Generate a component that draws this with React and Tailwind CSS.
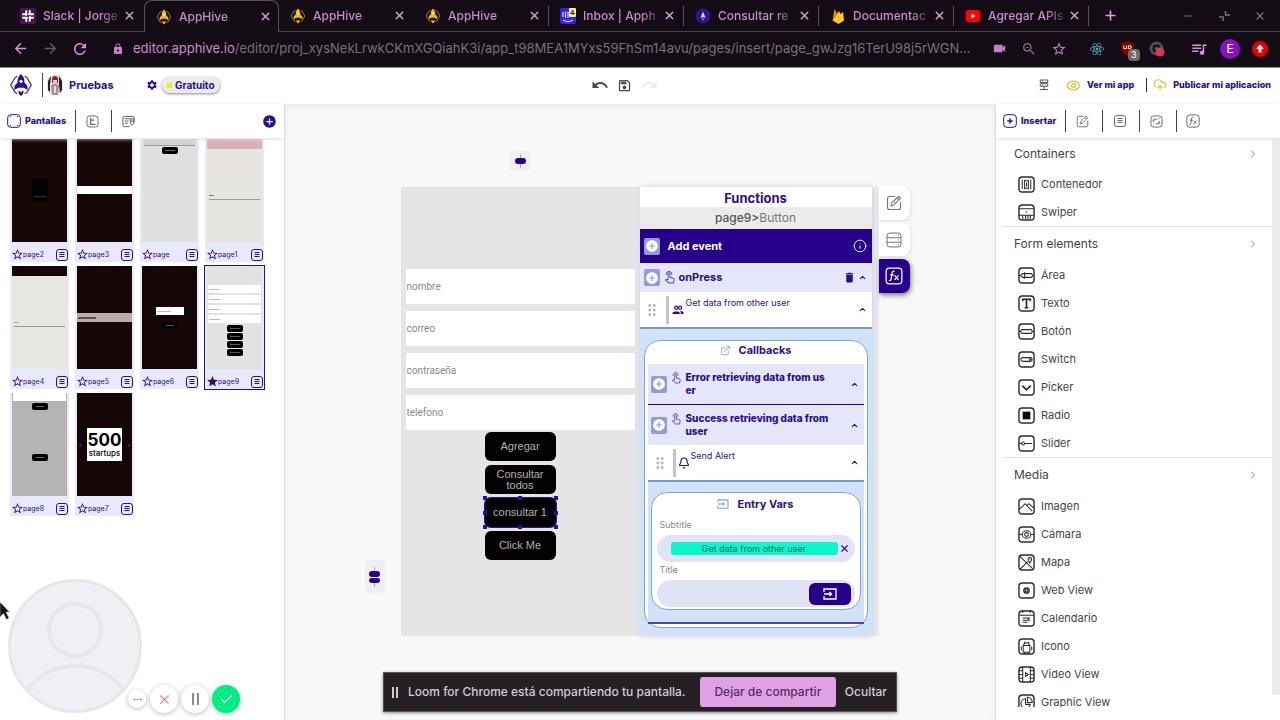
import React from "react";
import {
  MdArrowBack, MdArrowForward, MdRefresh, MdLock, MdVideocam, MdZoomOut, MdStarBorder, MdStar,
  MdQueueMusic, MdUndo, MdRedo, MdOutlineSave, MdSettings, MdAddCircle, MdDelete,
  MdDragIndicator,
} from "react-icons/md";
import { FaReact } from "react-icons/fa";
import { X, Plus, Minus, ChevronRight, ChevronUp, Eye, CloudUpload, Info, Bell, Check, Ellipsis, ExternalLink } from "lucide-react";

function Hive({ className, color, body }) {
  return (
    <svg viewBox="0 0 24 26" className={className} fill="none" stroke={color} strokeWidth="1.4" aria-hidden="true">
      <path d="M8 3.5 5.5 5 .9 13l4.600 8 2.500 1.500M16 3.500 18.500 5l4.600 8-4.600 8-2.500 1.500" />
      <path d="M12 1c-3 2.500-4 6-3.600 9L5 14v4.500l4-2.500h6l4 2.500V14l-3.400-4C16 7 15 3.500 12 1Z" fill={body} stroke="none" />
      <circle cx="12" cy="9" r="1.700" fill="#fff" stroke="none" />
      <path d="M9 19.500h1.500l1.500 1.500 1.500-1.500H15L14 23l-2 2-2-2Z" fill={body} stroke="none" />
    </svg>
  );
}

function Favicon({ kind }) {
  if (kind === "hive") return <Hive className="h-4 w-4" color="#a98b3c" body="#f5b80f" />;
  const cls = "h-4 w-4";
  if (kind === "slack")
    return (
      <svg viewBox="0 0 16 16" className={cls} aria-hidden="true">
        <rect width="16" height="16" rx="2" fill="#4a154b" />
        <path d="M6.300 3v4M9.700 9v4M3 9.700h4M9 6.300h4M9.700 3v2M6.300 11v2M3 6.300h2M11 9.700h2" stroke="#fff" strokeWidth="2" strokeLinecap="round" />
      </svg>
    );
  if (kind === "inbox")
    return (
      <svg viewBox="0 0 16 16" className={cls} aria-hidden="true">
        <rect width="16" height="16" rx="2" fill="#3a22d8" />
        <path d="M3 4v5M5.500 3.500v6.500M8 3.500v6.500M3 12c3 2 7 2 10 0" stroke="#dcd6ff" strokeWidth="1.200" fill="none" />
        <rect x="9" width="7" height="9" rx="1" fill="#f2ee9a" />
        <path d="M13 7V2l-2.500 3.500H15" stroke="#333" fill="none" />
      </svg>
    );
  if (kind === "docs")
    return (
      <svg viewBox="0 0 16 16" className={cls} aria-hidden="true">
        <circle cx="8" cy="8" r="7.500" fill="#34128f" />
        <path d="M8 3.500 5.500 10 8 9l2.500 1Z" fill="#e4dbff" />
        <path d="m7 10.500 1 2 1-2Z" fill="#e4dbff" />
      </svg>
    );
  if (kind === "fire")
    return (
      <svg viewBox="0 0 16 16" className={cls} aria-hidden="true">
        <path d="M2.500 12.500 4.500 1 7 5.500Z" fill="#f58a0b" />
        <path d="M2.500 12.500 9 3l1.500 3L13 4l1 8.500L8.500 16Z" fill="#ffca28" />
      </svg>
    );
  return (
    <svg viewBox="0 0 16 16" className={cls} aria-hidden="true">
      <rect x=".5" y="2" width="15" height="12" rx="3" fill="#f00" />
      <path d="m6.500 5.500 4 2.500-4 2.500Z" fill="#fff" />
    </svg>
  );
}

const TABS = [
  ["slack", "Slack | Jorge"],
  ["hive", "AppHive", true],
  ["hive", "AppHive"],
  ["hive", "AppHive"],
  ["inbox", "Inbox | Apph"],
  ["docs", "Consultar re"],
  ["fire", "Documentac"],
  ["youtube", "Agregar APIs"],
];

function Tab({ tab, divider }) {
  const [icon, title, active] = tab;
  return (
    <div
      className={
        "flex w-[135px] shrink-0 items-center pl-[11px] " +
        (active ? "rounded-t-lg border border-b-0 border-[#5b505c]" : "border-b border-[#4a404b]")
      }
    >
      <Favicon kind={icon} />
      <span className="ml-[7px] w-[76px] whitespace-nowrap text-[12px] font-medium text-[#c690cc] [mask-image:linear-gradient(90deg,#000_75%,#0004)]">
        {title}
      </span>
      <button aria-label="Cerrar pestaña" className="ml-1 text-[#d9a3dd]"><X size={13} strokeWidth={2.5} /></button>
      {divider && <span className="ml-auto h-5 w-px bg-[#5b505c]" />}
    </div>
  );
}

function BrowserChrome() {
  return (
    <header className="shrink-0 border-b border-[#8b8b8b] bg-[#140c14] font-['Inter',sans-serif]">
      <div className="flex h-8">
        <div className="w-[9px] shrink-0 border-b border-[#4a404b]" />
        {TABS.map((t, i) => <Tab key={i} tab={t} divider={i > 2} />)}
        <div className="flex grow items-center border-b border-[#4a404b] pl-[14px] text-[#8e6492]">
          <button aria-label="Nueva pestaña" className="text-[#d9a3dd]"><Plus size={15} strokeWidth={2.5} /></button>
          <div className="ml-auto flex items-center gap-6 pr-[14px]">
            <button aria-label="Minimizar"><Minus size={12} /></button>
            <button aria-label="Restaurar">
              <svg viewBox="0 0 12 12" className="h-3 w-3" fill="none" stroke="currentColor" strokeWidth="1.500"><path d="M1 7h4v4M7.500 1v4H12" /></svg>
            </button>
            <button aria-label="Cerrar"><X size={12} strokeWidth={2.5} /></button>
          </div>
        </div>
      </div>
      <div className="flex h-[35px] items-center px-3 pb-[2px] text-[#bf83c5]">
        <button aria-label="Atrás" className="text-[#d694dc]"><MdArrowBack size={17} /></button>
        <button aria-label="Adelante" className="ml-[13px] text-[#6e5571]"><MdArrowForward size={17} /></button>
        <button aria-label="Recargar" className="ml-3 text-[#d694dc]"><MdRefresh size={18} /></button>
        <MdLock size={12} className="ml-[23px] shrink-0" />
        <p className="ml-[9px] min-w-0 grow truncate text-[13px] text-[#7b6f7d]">
          <span className="text-[#c690cc]">editor.apphive.io</span>/editor/proj_xysNekLrwkCKmXGQiahK3i/app_t98MEA1MYxs59FhSm14avu/pages/insert/page_gwJzg16TerU98j5rWGN...
        </p>
        <div className="ml-2 flex shrink-0 items-center">
          <MdVideocam size={15} />
          <MdZoomOut size={16} className="ml-[14px] text-[#8e6492]" />
          <MdStarBorder size={16} className="ml-[14px]" />
          <FaReact size={14} className="ml-[23px] text-[#4fb8cf]" />
          <span className="relative ml-4">
            <svg viewBox="0 0 16 16" className="h-[15px] w-[15px]"><path d="M8 0c2 1.500 4 2 6.500 2v6c0 4-3 6.500-6.500 8-3.500-1.500-6.500-4-6.500-8V2C4 2 6 1.500 8 0Z" fill="#8a0000" /><path d="M4 5v3h3V5M9 5h1.500c2 0 2 3 0 3H9Z" stroke="#fff" fill="none" /></svg>
            <span className="absolute left-2 top-2 rounded-sm bg-[#6c6c6c] px-[3px] text-[9px] leading-3 text-white">3</span>
          </span>
          <svg viewBox="0 0 16 16" className="ml-[14px] h-4 w-4"><circle cx="7.500" cy="7.500" r="5.500" fill="none" stroke="#4e4d52" strokeWidth="3" /><circle cx="7.500" cy="7.500" r="2" fill="#4e4d52" /><circle cx="11" cy="11" r="4.500" fill="#d63a4a" /></svg>
          <MdQueueMusic size={18} className="ml-[25px] text-[#d694dc]" />
          <span className="ml-3 flex h-5 w-5 items-center justify-center rounded-full bg-[#8a10c4] text-[12px] text-white">E</span>
          <svg viewBox="0 0 16 16" className="ml-3 h-4 w-4"><circle cx="8" cy="8" r="8" fill="#e60000" /><path d="m8 3.500 4 4.300H9.500v3.700h-3V7.800H4Z" fill="#fff" /></svg>
        </div>
      </div>
    </header>
  );
}

function AppBar() {
  return (
    <nav className="flex h-9 shrink-0 items-center bg-white pb-[2px] text-[#2a0f8c]">
      <div className="flex flex-1 items-center pl-[9px]">
        <Hive className="h-6 w-6" color="#3b3a7a" body="#2a0f8c" />
        <span className="ml-[9px] h-6 w-px bg-[#444]" />
        <svg viewBox="0 0 16 20" className="ml-1 h-5 w-4" aria-hidden="true">
          <rect width="16" height="20" rx="7" fill="#e9dfe0" />
          <path d="M1 15V6L4 1l-1 9v7ZM12 1l3 5v9l-2 3-1-8Z" fill="#2a2024" />
          <path d="M5 4c0-4 6-4 6 0v4H5Z" fill="#8c2433" />
          <path d="M6 5h4v4H6Z" fill="#e8c5bd" />
          <path d="M4 11c2-3 6-3 8 0l-1 9H5Z" fill="#a58e92" />
          <path d="M7 11h2v7H7Z" fill="#e5d7d8" />
        </svg>
        <b className="ml-[6px] w-[77px] text-[11px]">Pruebas</b>
        <button aria-label="Configuración"><MdSettings size={12} /></button>
        <span className="ml-1 flex h-4 items-center rounded-full bg-[#ebebeb] px-[5px] text-[10px] font-bold shadow-[0_1px_3px_#888]">
          <i className="mr-[3px] h-[5px] w-[5px] bg-[#e6f200]" />Gratuito
        </span>
      </div>
      <div className="flex items-center gap-2 pr-8 text-[#4a4a4a]">
        <button aria-label="Deshacer"><MdUndo size={18} /></button>
        <button aria-label="Guardar"><MdOutlineSave size={15} /></button>
        <button aria-label="Rehacer" className="text-[#ececec]"><MdRedo size={18} /></button>
      </div>
      <div className="flex flex-1 items-center justify-end pr-[9px] text-[9px] font-extrabold">
        <svg viewBox="0 0 12 14" className="h-3 w-[10px]" fill="none" stroke="#555" strokeWidth="1.200"><path d="M1.500 1h9v3h-9zM1.500 5.500h9v3h-9zM6 8.500V12M1 12.500h10M3.500 2.500h1M3.500 7h1" /></svg>
        <a href="#preview" className="ml-[17px] flex items-center gap-[6px]"><Eye size={15} className="text-[#efb92c]" />Ver mi app</a>
        <span className="ml-3 mr-[6px] h-[14px] w-px bg-[#333]" />
        <a href="#publish" className="flex items-center gap-[6px]"><CloudUpload size={14} className="text-[#efb92c]" />Publicar mi aplicacion</a>
      </div>
    </nav>
  );
}

function MenuSquare({ className }) {
  return (
    <svg viewBox="0 0 12 12" className={className} fill="none" stroke="currentColor" aria-hidden="true">
      <rect x=".5" y=".5" width="11" height="11" rx="2.500" />
      <path d="M3.500 3.500h5M3.500 5.500h5M3.500 7.500h5" />
    </svg>
  );
}

function Vr() {
  return <span className="h-[22px] w-px bg-[#444]" />;
}

const PAGES = [
  { name: "page2", bg: "bg-[#150608]", art: <div className="mx-auto mt-10 flex h-[22px] w-4 flex-col items-center justify-end gap-1 bg-[#040203] pb-1"><i className="h-px w-3 bg-[#3a3325]" /></div> },
  { name: "page3", bg: "bg-[#150608]", art: <div className="mt-[47px] h-2 bg-white" /> },
  { name: "page", bg: "bg-[#dedfde]", art: <div><div className="mx-[2px] h-[7px] border-b border-[#999] bg-[#d3d3d3]" /><div className="mx-auto mt-px h-[7px] w-4 rounded-[2px] bg-black px-[3px] pt-[3px]"><i className="block h-px bg-[#666]" /></div></div> },
  { name: "page1", bg: "bg-[#e6e5e2]", art: <div><div className="h-[10px] bg-[#d9b0b8]" /><i className="ml-[2px] mt-[46px] block h-px w-[5px] bg-[#777]" /><i className="mx-[2px] mt-[3px] block h-px bg-[#999]" /></div> },
  { name: "page4", bg: "bg-[#e6e6e2]", art: <div><div className="h-[10px] bg-[#150608]" /><i className="ml-[2px] mt-[46px] block h-px w-[5px] bg-[#aaa]" /><i className="mx-[2px] mt-[3px] block h-px bg-[#999]" /></div> },
  { name: "page5", bg: "bg-[#150608]", art: <div className="mt-[47px] flex h-[9px] items-center bg-[#b8acad] pl-px"><i className="h-[2px] w-[18px] bg-[#5a4e50]" /></div> },
  { name: "page6", bg: "bg-[#150608]", art: <div><div className="mx-auto mt-[41px] flex h-2 w-7 items-center bg-white pl-px"><i className="h-px w-[14px] bg-[#c8b3b5]" /></div><div className="mx-auto mt-[7px] h-[6px] w-4 bg-[#050203] px-1 pt-[3px]"><i className="block h-px bg-[#555]" /></div></div> },
  {
    name: "page9", bg: "bg-[#e2e2e2]", selected: true,
    art: (
      <div className="flex flex-col gap-px px-px pt-[19px]">
        {[0, 1, 2, 3].map((k) => <div key={k} className="mb-px flex h-2 items-center bg-white pl-px"><i className="h-px w-[11px] bg-[#bbb]" /></div>)}
        {[0, 1, 2, 3].map((k) => <div key={k} className="mx-auto flex h-[7px] w-4 items-center rounded-[2px] bg-black px-[3px]"><i className="h-px grow bg-[#555]" /></div>)}
      </div>
    ),
  },
  { name: "page8", bg: "bg-[#b4b4b3]", art: <div><div className="mx-px h-2 bg-white" /><div className="mx-auto mt-[2px] h-[7px] w-4 rounded-[2px] bg-black px-1 pt-[3px]"><i className="block h-px bg-[#666]" /></div><div className="mx-auto mt-[44px] h-[7px] w-4 rounded-[2px] bg-black px-1 pt-[3px]"><i className="block h-px bg-[#666]" /></div></div> },
  {
    name: "page7", bg: "bg-[#150608]",
    art: (
      <div className="flex items-center justify-between px-[2px] pt-[35px] text-[6px] text-[#8a7a7c]">
        <span>‹</span>
        <div className="flex h-[33px] w-[35px] flex-col items-center justify-center bg-white text-black">
          <b className="text-[17px] leading-[16px]">500</b>
          <span className="text-[8px] font-medium leading-[10px]">startups</span>
        </div>
        <span>›</span>
      </div>
    ),
  },
];

function PageCard({ page }) {
  return (
    <li className={"flex h-[123px] flex-col bg-[#e9e9fd] px-[2px] text-[#2a0f8c] outline-[#2a0f8c] " + (page.selected ? "outline" : "")}>
      <div className={"h-[103px] overflow-hidden " + page.bg}>{page.art}</div>
      <div className="-mx-px flex grow items-center pt-[5px]">
        {page.selected ? <MdStar size={13} /> : <MdStarBorder size={13} />}
        <span className="-ml-px text-[7px] leading-[10px]">{page.name}</span>
        <button aria-label={"Opciones de " + page.name} className="ml-auto"><MenuSquare className="h-3 w-3" /></button>
      </div>
    </li>
  );
}

function ScreensPanel() {
  return (
    <aside className="flex w-[285px] shrink-0 flex-col border-r border-[#dcdcdc] bg-white">
      <div className="z-10 flex h-[34px] shrink-0 items-center px-[7px] text-[#2a0f8c] shadow-[0_1px_4px_#ddd]">
        <svg viewBox="0 0 14 14" className="h-[14px] w-[14px]" fill="none" stroke="currentColor"><rect x=".7" y=".7" width="12.600" height="12.600" rx="3" /><path d="M3 2.500h1M10 2.500h1M3 11.500h1M10 11.500h1" /></svg>
        <button className="ml-1 w-[50px] text-left text-[9px] font-extrabold">Pantallas</button>
        <Vr />
        <button aria-label="Árbol" className="ml-[10px] mr-3 text-[#666]">
          <svg viewBox="0 0 14 14" className="h-[13px] w-[13px]" fill="none" stroke="currentColor"><rect x="1" y="1" width="12" height="12" rx="3" /><path d="M5 3v7h5M5 5.500h4" strokeWidth="1.300" /></svg>
        </button>
        <Vr />
        <button aria-label="Notas" className="ml-[10px] text-[#555]">
          <svg viewBox="0 0 14 14" className="h-[13px] w-[13px]" fill="none" stroke="currentColor"><path d="M8 12.500H2.500a1.500 1.500 0 0 1-1.500-1.500V3a1.500 1.500 0 0 1 1.500-1.500h9A1.500 1.500 0 0 1 13 3v5M3 4h5M3 6.500h4M3 9h3M9 3.500v5.500l1.500 2L12.500 9V4M10.700 3v5" /></svg>
        </button>
        <button aria-label="Agregar pantalla" className="ml-auto"><MdAddCircle size={15} /></button>
      </div>
      <ul className="grid grid-cols-4 gap-x-[6px] gap-y-1 pl-[10px] pr-[20px] pt-px">
        {PAGES.map((p) => <PageCard key={p.name} page={p} />)}
      </ul>
    </aside>
  );
}

function SpacingHandle({ double }) {
  return (
    <div className={"flex w-5 flex-col items-center justify-center rounded-sm bg-[#efeff3] " + (double ? "h-[33px]" : "h-5")}>
      <i className="h-1 w-px bg-[#aaa]" />
      <i className="h-[6px] w-[11px] rounded-[3px] bg-[#26008b]" />
      {double && <i className="h-[6px] w-[11px] rounded-[3px] border-t border-[#efeff3] bg-[#26008b]" />}
      <i className="h-1 w-px bg-[#aaa]" />
    </div>
  );
}

const HANDLES = [
  "-left-[2px] -top-[2px]", "left-[33px] -top-[2px]", "-right-[2px] -top-[2px]",
  "-left-[2px] top-[13px]", "-right-[2px] top-[13px]",
  "-left-[2px] -bottom-[2px]", "left-[33px] -bottom-[2px]", "-right-[2px] -bottom-[2px]",
];

function Phone() {
  return (
    <div className="flex h-[449px] flex-col bg-[#e5e5e5] px-[5px] pt-[82px] font-['Roboto',sans-serif]">
      <div className="flex flex-col gap-[7px]">
        {["nombre", "correo", "contraseña", "telefono"].map((p) => (
          <input key={p} aria-label={p} placeholder={p} className="h-[35px] w-full bg-white px-px text-[10px] placeholder:text-[#888]" />
        ))}
      </div>
      <div className="mt-[2px] flex flex-col items-center gap-1 font-['Liberation_Sans',sans-serif] text-[11px] leading-[11px] text-[#b5b0b0]">
        {["Agregar", "Consultar todos", "consultar 1", "Click Me"].map((b, i) => (
          <button key={b} className={"relative h-[29px] w-[71px] rounded-md bg-[#040103] px-2 " + (i === 2 ? "ring-1 ring-[#2a0fa0]" : "")}>
            {b}
            {i === 2 && HANDLES.map((h) => <i key={h} className={"absolute h-1 w-1 bg-[#2a0fa0] " + h} />)}
          </button>
        ))}
      </div>
    </div>
  );
}

function AddBox() {
  return (
    <button aria-label="Agregar" className="flex h-[17px] w-4 shrink-0 items-center justify-center rounded-[2px] bg-[#939bdc] text-white">
      <MdAddCircle size={14} />
    </button>
  );
}

function Collapse() {
  return <button aria-label="Contraer" className="shrink-0 text-[#2a0f8c]"><ChevronUp size={9} strokeWidth={3} /></button>;
}

function TapIcon({ className }) {
  return (
    <svg viewBox="0 0 12 14" className={className} fill="none" stroke="currentColor" strokeWidth="1.100" strokeLinejoin="round" aria-hidden="true">
      <path d="M4.500 9.500V3.200a1 1 0 0 1 2 0V7l3.600.8c.7.200 1 .6.9 1.300l-.6 3.900H5.600L1.500 9.600c.8-.8 1.500-.7 3-.1M2.600 4.200a3 3 0 1 1 5.800 0" />
    </svg>
  );
}

function PeopleIcon({ className }) {
  return (
    <svg viewBox="0 0 13 11" className={className} fill="none" stroke="currentColor" strokeWidth="1.300" aria-hidden="true">
      <circle cx="4.500" cy="3" r="1.700" />
      <circle cx="8.800" cy="3" r="1.700" />
      <path d="M.5 10V8.600C1.500 6.500 7.500 6.500 8.500 8.600V10ZM9 6.200c2 .1 3.500 1 3.500 2.200V10H9.500V8.500C9.500 7.500 9.300 7 9 6.200Z" fill="currentColor" stroke="none" />
    </svg>
  );
}

function CallbackHead({ children }) {
  return (
    <div className="flex h-10 items-center bg-[#e6e6fb] pl-[3px] pr-[5px]">
      <AddBox />
      <TapIcon className="mb-3 ml-1 mr-[5px] h-3 w-[10px] shrink-0 text-[#5a4bb0]" />
      <b className="grow whitespace-nowrap text-[10px] font-extrabold leading-[13px]">{children}</b>
      <Collapse />
    </div>
  );
}

function EntryIcon({ className }) {
  return (
    <svg viewBox="0 0 14 12" className={className} fill="none" stroke="currentColor" strokeWidth="1.300" aria-hidden="true">
      <path d="M1 4V1h12v10H1V8M1 6h7.500M6.500 4l2 2-2 2" />
    </svg>
  );
}

function FunctionsPanel() {
  return (
    <section className="z-10 flex h-[449px] w-[232px] flex-col bg-[#d2e2f8] text-[#2a0f8c] shadow-[1px_0_6px_#c5d3e8]">
      <h2 className="h-5 bg-white text-center text-[13px] font-bold leading-[22px]">Functions</h2>
      <p className="h-[22px] bg-[#ebebeb] text-center text-[12px] leading-[22px] text-[#777]"><span className="font-medium text-[#555]">page9&gt;</span>Button</p>
      <div className="flex h-[34px] items-center bg-[#26008b] pl-1 pr-[5px] text-white">
        <AddBox />
        <b className="ml-2 grow text-[11px]">Add event</b>
        <Info size={14} strokeWidth={1.6} />
      </div>
      <div className="flex h-[29px] items-center bg-[#e6e6fb] pl-1 pr-[5px]">
        <AddBox />
        <TapIcon className="ml-1 h-[13px] w-[11px] text-[#5a4bb0]" />
        <b className="ml-1 grow text-[11px]">onPress</b>
        <button aria-label="Eliminar" className="mr-[2px]"><MdDelete size={13} /></button>
        <Collapse />
      </div>
      <div className="flex h-[37px] items-center border-b-2 border-[#6f9dd4] bg-white pl-[3px] pr-[5px]">
        <MdDragIndicator size={18} className="text-[#bbb]" />
        <i className="ml-[5px] h-7 w-[3px] bg-[#c4c4c4]" />
        <PeopleIcon className="ml-[3px] h-[10px] w-3" />
        <span className="mb-[14px] ml-[2px] grow text-[9px]">Get data from other user</span>
        <Collapse />
      </div>
      <div className="mx-1 mt-[11px] flex h-[288px] flex-col rounded-2xl border border-[#7ba5d8] bg-white px-[3px]">
        <h3 className="flex h-[23px] items-center justify-center gap-2 pb-1 text-[11px] font-bold"><ExternalLink size={11} className="text-[#7ba5d8]" />Callbacks</h3>
        <div className="border-b border-[#26008b]"><CallbackHead>Error retrieving data from us<br />er</CallbackHead></div>
        <CallbackHead>Success retrieving data from<br />user</CallbackHead>
        <div className="flex h-[37px] items-center border-b-2 border-[#6f9dd4] pl-[3px] pr-[5px]">
          <MdDragIndicator size={18} className="text-[#bbb]" />
          <i className="ml-1 h-7 w-[3px] bg-[#c4c4c4]" />
          <Bell size={12} strokeWidth={2.3} className="ml-[2px]" />
          <span className="mb-[14px] ml-px grow text-[9px]">Send Alert</span>
          <Collapse />
        </div>
        <div className="flex flex-col border-b-2 border-[#4d45a8] bg-[#d2e2f8] px-[3px] pb-3 pt-[10px]">
          <div className="flex h-[118px] flex-col rounded-2xl border border-[#7ba5d8] bg-white px-[5px]">
            <h3 className="flex h-[22px] items-center justify-center gap-2 text-[11px] font-bold"><EntryIcon className="h-[10px] w-3 text-[#7ba5d8]" />Entry Vars</h3>
            <span className="h-5 px-[3px] text-[9px] leading-[20px] text-[#888]">Subtitle</span>
            <div className="flex h-[27px] items-center rounded-full bg-[#e3e3f6] pl-[14px] pr-[5px]">
              <button className="h-[13px] grow rounded-[3px] bg-[#0cf5cb] text-[9px] leading-[13px] text-[#206760]">Get data from other user</button>
              <button aria-label="Quitar" className="ml-px"><X size={11} strokeWidth={2.5} /></button>
            </div>
            <label htmlFor="alert-title" className="h-[18px] px-[3px] text-[9px] leading-[16px] text-[#888]">Title</label>
            <div className="flex h-[27px] items-center rounded-full bg-[#e3e3f6] pl-3 pr-1">
              <input id="alert-title" className="h-full min-w-0 grow bg-transparent text-[10px]" />
              <button aria-label="Insertar variable" className="flex h-[22px] w-[42px] shrink-0 items-center justify-center rounded-md bg-[#26008b] text-white"><EntryIcon className="h-3 w-[14px]" /></button>
            </div>
          </div>
        </div>
      </div>
    </section>
  );
}

function EditSquare({ className }) {
  return (
    <svg viewBox="0 0 16 16" className={className} fill="none" stroke="currentColor" strokeWidth="1.100" aria-hidden="true">
      <path d="M14.500 7v5.500a2 2 0 0 1-2 2h-9a2 2 0 0 1-2-2v-9a2 2 0 0 1 2-2H9M5 11l.7-3L12.500 1.300l2 2L7.800 10 5 11ZM11 3l2 2" />
    </svg>
  );
}

function FxSquare({ className }) {
  return (
    <svg viewBox="0 0 16 16" className={className} fill="none" stroke="currentColor" strokeWidth="1.100" aria-hidden="true">
      <rect x="1" y="1" width="14" height="14" rx="3" />
      <path d="M8.500 3.800c-1.500-.5-2 .3-2.200 1.700l-.8 5c-.2 1.300-.8 1.800-2 1.500M4.500 7h3.300M8.500 7.500l3.500 4M12 7.500l-3.500 4" />
    </svg>
  );
}

function Editor() {
  return (
    <main className="flex min-w-0 flex-1 items-start justify-center overflow-hidden bg-[#f8f8f8] pr-[6px] pt-[47px] shadow-[inset_0_3px_6px_#ececec]">
      <div className="mr-4 mt-[409px]"><SpacingHandle double /></div>
      <div className="flex w-[239px] flex-col">
        <div className="mb-4 flex justify-center"><SpacingHandle /></div>
        <Phone />
      </div>
      <div className="mt-9 flex bg-[#e9e9e9] pr-[7px]"><FunctionsPanel /></div>
      <div className="mt-[35px] flex flex-col gap-[3px]">
        <button aria-label="Editar" className="flex h-[34px] w-[31px] items-center justify-center rounded-r-lg bg-white text-[#777] shadow-[1px_1px_3px_#ddd]"><EditSquare className="h-4 w-4" /></button>
        <button aria-label="Datos" className="flex h-[33px] w-[31px] items-center justify-center rounded-r-lg bg-white text-[#777] shadow-[1px_1px_3px_#ddd]">
          <svg viewBox="0 0 16 16" className="h-4 w-4" fill="none" stroke="currentColor"><rect x="1" y="1" width="14" height="14" rx="3" /><path d="M1 5.700h14M1 10.300h14M12 3.500h1M12 8h1M12 12.600h1" /></svg>
        </button>
        <button aria-label="Funciones" className="flex h-[34px] w-[31px] items-center justify-center rounded-r-lg bg-[#26008b] text-white shadow-[1px_2px_5px_#777]"><FxSquare className="h-[18px] w-[18px]" /></button>
      </div>
    </main>
  );
}

const GLYPHS = {
  Contenedor: <path d="M4.500 4v10M7 4v10M7 5h4v8H7M11 4v10M13.500 4v10M9 7v4" />,
  Swiper: <path d="M1 5h16M1 12h16M8 8.500h2M5 12v4M8 12v4M10.500 12v4M13 12v4" />,
  "Área": <path d="M1 9h2l1.500-2H7v4H4.500L3 9M7 7h7l2 2-2 2H7M7 5.500v7" />,
  Texto: <path d="M5 6.500V4.500h8v2M9 4.500v9M7 13.500h4" strokeWidth="1.800" />,
  "Botón": <path d="M1 9h2M15 9h2M4.500 7h9a1.500 2 0 0 1 0 4h-9a1.500 2 0 0 1 0-4Z" />,
  Switch: <path d="M5 7h8a2 2 0 0 1 0 4H5a2 2 0 0 1 0-4ZM12 8l1.500 1-1.500 1" />,
  Picker: <path d="m4.500 7 4.500 4.500L13.500 7" strokeWidth="1.800" />,
  Radio: <rect x="5.500" y="5.500" width="7" height="7" fill="#000" stroke="#000" />,
  Slider: <path d="M1.500 9H4M7 9h8M4 9a1.500 1.500 0 1 0 3 0 1.500 1.500 0 1 0-3 0" />,
  Imagen: <path d="m1.500 12 6-6 7.500 8M9.500 8l2-2 5 4.500" />,
  "Cámara": <path d="M1 9h3M14 9h3M4.500 9a4.500 4 0 1 0 9 0 4.500 4 0 1 0-9 0M7 9a2 2 0 1 0 4 0 2 2 0 1 0-4 0" />,
  Mapa: <path d="m2 2.500 13.500 13M2.500 16 10 8M12.500 9.500c-3-4-2-6 0-6s3 2 0 6ZM12.500 5v1" />,
  "Web View": <><circle cx="9" cy="9" r="3" fill="#444" /><path d="M6 9h6M9 6v6" stroke="#bbb" strokeWidth=".5" /></>,
  Calendario: <path d="M1.500 5.500h15M5 0v3M13 0v3M5 8.500h8M5 10.800h8M5 13h5M11 8v3" />,
  Icono: <path d="M5.500 8h7v7h-7ZM3.500 9v4M14.500 9v4M7 15v2M11 15v2M6 8c0-4 6-4 6 0M6.500 4l1 1.500M11.500 4l-1 1.500" />,
  "Video View": <path d="M5 1v16M13 1v16M1 5h4M1 9h4M1 13h4M13 5h4M13 9h4M13 13h4M8 7l3 2-3 2Z" />,
  "Graphic View": <path d="M8 5a5 5 0 1 0 5 6H8ZM10 3.500V9h5a5 5 0 0 0-5-5.500Z" />,
};

const SECTIONS = [
  ["Containers", ["Contenedor", "Swiper"]],
  ["Form elements", ["Área", "Texto", "Botón", "Switch", "Picker", "Radio", "Slider"]],
  ["Media", ["Imagen", "Cámara", "Mapa", "Web View", "Calendario", "Icono", "Video View", "Graphic View"]],
];

function InsertPanel() {
  return (
    <aside className="flex w-[285px] shrink-0 flex-col border-l border-[#dcdcdc] bg-white">
      <div className="z-10 flex h-[34px] shrink-0 items-center pl-[7px] text-[#666] shadow-[0_1px_4px_#ddd]">
        <svg viewBox="0 0 14 14" className="h-[14px] w-[14px] text-[#2a0f8c]" fill="none" stroke="currentColor"><rect x=".7" y=".7" width="12.600" height="12.600" rx="3" /><path d="M7 4.300v5.400M4.300 7h5.400" strokeWidth="1.400" /></svg>
        <button className="ml-1 w-[44px] text-left text-[9px] font-extrabold text-[#2a0f8c]">Insertar</button>
        <Vr />
        <button aria-label="Editar" className="flex w-9 justify-center pr-[3px]"><EditSquare className="h-[13px] w-[13px]" /></button>
        <Vr />
        <button aria-label="Lista" className="flex w-9 justify-center pr-[3px]"><MenuSquare className="h-3 w-3" /></button>
        <Vr />
        <button aria-label="Conexiones" className="flex w-9 justify-center pr-[3px]">
          <svg viewBox="0 0 14 14" className="h-[13px] w-[13px]" fill="none" stroke="currentColor"><rect x="1" y="1" width="12" height="12" rx="3" /><path d="M4 6.500V4.500h4M10 7.500v2H6M9.500 3.500h1M3.500 10.500h1M2.800 6l1.200 1 1.200-1M8.800 8l1.200-1 1.200 1" /></svg>
        </button>
        <Vr />
        <button aria-label="Funciones" className="ml-[9px]"><FxSquare className="h-[14px] w-[14px]" /></button>
      </div>
      <div className="mb-[13px] flex min-h-0 grow overflow-hidden">
        <div className="grow pl-[7px]">
          {SECTIONS.map(([title, items], i) => (
            <section key={title} className={i ? "border-t border-[#e2e2e2]" : ""}>
              <button className={"flex w-full items-center justify-between pl-[11px] pr-[13px] text-[12px] text-[#444] " + (i ? "h-[34px]" : "h-8")}>
                {title}<ChevronRight size={12} className="text-[#888]" />
              </button>
              {items.map((n) => (
                <button key={n} className="flex h-7 w-full items-center gap-[6px] pl-[15px] text-[11px] text-[#444]">
                  <svg viewBox="0 0 18 18" className="h-[17px] w-[17px]" fill="none" stroke="#2b2b2b" strokeWidth="1.100" aria-hidden="true">
                    <rect x="1" y="1" width="16" height="16" rx="3.500" strokeWidth="1.500" />
                    {GLYPHS[n]}
                  </svg>
                  {n}
                </button>
              ))}
            </section>
          ))}
        </div>
        <div className="mb-3 w-2 shrink-0 bg-[#ececec]" />
      </div>
    </aside>
  );
}

function LoomControls() {
  const round = "flex items-center justify-center rounded-full shadow-[0_1px_5px_#bbb] ";
  return (
    <div className="absolute bottom-[7px] left-2 z-20 flex items-end">
      <svg viewBox="0 0 134 134" className="h-[134px] w-[134px]" aria-hidden="true">
        <defs><clipPath id="face"><circle cx="67" cy="67" r="65" /></clipPath></defs>
        <circle cx="67" cy="67" r="65.500" fill="#eff0f4" stroke="#e6e7ea" strokeWidth="3" />
        <g clipPath="url(#face)" fill="none" stroke="#e6e7ea" strokeWidth="4">
          <circle cx="67" cy="51" r="26" />
          <ellipse cx="67" cy="128" rx="52" ry="41" />
        </g>
      </svg>
      <div className="-ml-[14px] flex items-center">
        <button aria-label="Más" className={round + "h-[18px] w-[18px] bg-white text-[#777]"}><Ellipsis size={11} /></button>
        <button aria-label="Cancelar" className={round + "ml-1 h-7 w-7 bg-white text-[#e87f95]"}><X size={15} strokeWidth={1.8} /></button>
        <button aria-label="Pausar" className={round + "ml-[3px] h-7 w-7 bg-white text-[#888]"}>
          <i className="mr-[3px] h-3 w-[2px] bg-current" /><i className="h-3 w-[2px] bg-current" />
        </button>
        <button aria-label="Terminar" className={round + "ml-[3px] h-7 w-7 bg-[#00ef84] text-white"}><Check size={15} strokeWidth={1.8} /></button>
      </div>
    </div>
  );
}

function ShareBar() {
  return (
    <div className="absolute bottom-2 left-1/2 z-20 flex h-10 w-[514px] -translate-x-1/2 items-center border border-[#555] bg-[#242024] pl-2 pr-[9px] font-['Inter',sans-serif] text-[12px] font-medium text-[#d3ccd4] shadow-[0_1px_3px_#888]">
      <i className="mr-[2px] h-[11px] w-[2px] bg-current" /><i className="h-[11px] w-[2px] bg-current" />
      <span className="ml-[10px] whitespace-nowrap">Loom for Chrome está compartiendo tu pantalla.</span>
      <button className="ml-auto h-[30px] w-[136px] rounded-[3px] bg-[#dfa1e6] text-[#54305b]">Dejar de compartir</button>
      <button className="ml-[9px]">Ocultar</button>
    </div>
  );
}

export default function App() {
  return (
    <div className="relative flex h-screen flex-col overflow-hidden bg-white font-['Inter',sans-serif]">
      <BrowserChrome />
      <AppBar />
      <div className="flex min-h-0 flex-1">
        <ScreensPanel />
        <Editor />
        <InsertPanel />
      </div>
      <LoomControls />
      <ShareBar />
      <svg viewBox="0 0 10 20" className="absolute left-0 top-[601px] z-30 h-5 w-[10px]" aria-hidden="true"><path d="M0 1 9.500 11H6l3 6-2.500 1.500-3-6L0 16Z" fill="#111" stroke="#ddd" strokeWidth=".5" /></svg>
    </div>
  );
}
